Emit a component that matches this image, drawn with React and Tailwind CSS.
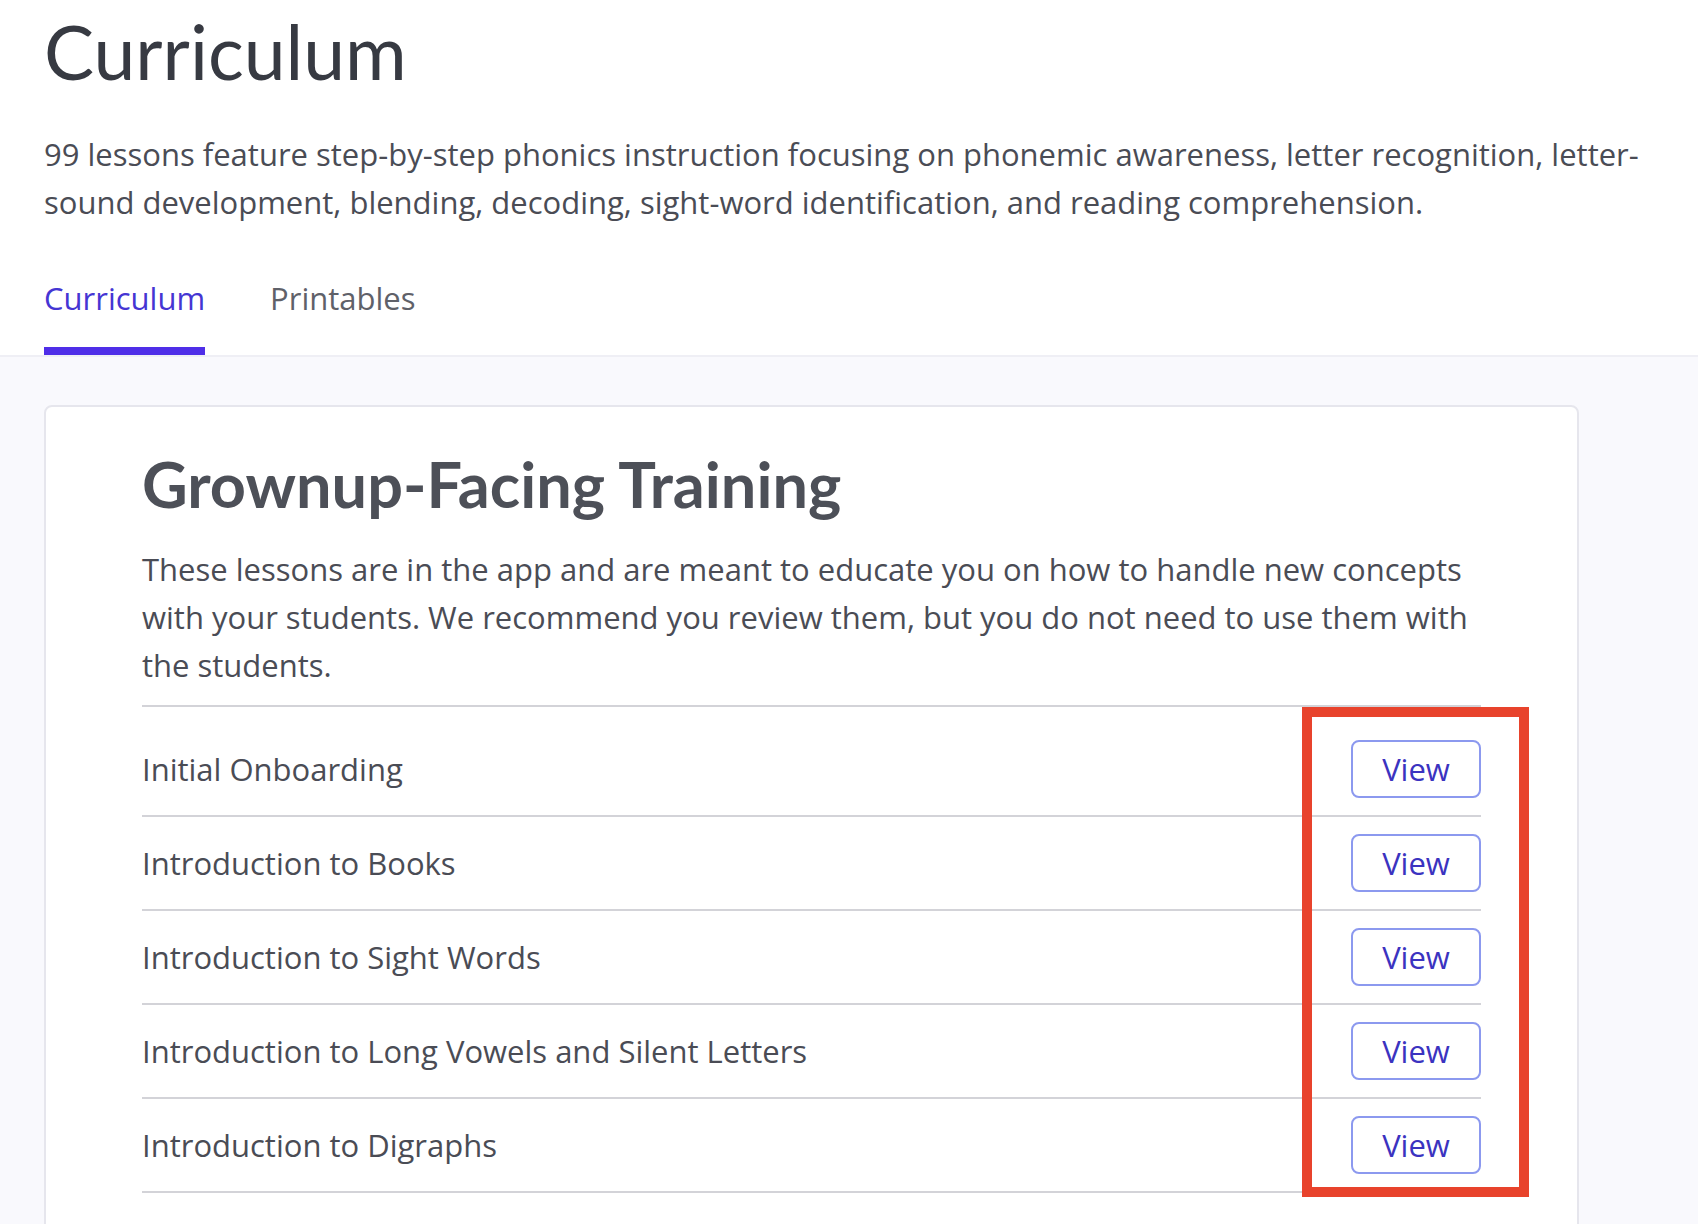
const lessons = [
  'Initial Onboarding',
  'Introduction to Books',
  'Introduction to Sight Words',
  'Introduction to Long Vowels and Silent Letters',
  'Introduction to Digraphs',
];

const body = { fontFamily: '"Open Sans", Lato, sans-serif' };
const display = { fontFamily: 'Lato, "Open Sans", sans-serif' };

const LessonRow = ({ title, first }) => (
  <div
    className={`flex items-center justify-between border-b-2 border-[#d3d3d8] pb-[17px] ${
      first ? 'pt-[33px]' : 'pt-[17px]'
    }`}
  >
    <span className="text-[31px] leading-[36px] text-[#4a4c55]">{title}</span>
    <button className="h-[58px] w-[130px] rounded-lg border-2 border-[#8c99ef] bg-white text-[31px] font-medium text-[#3b33c0]">
      View
    </button>
  </div>
);

export default function App() {
  return (
    <div className="relative h-[1224px] overflow-hidden bg-white" style={body}>
      {/* Page header */}
      <div className="px-[44px]">
        <h1 className="pt-[14px] text-[75px] leading-none text-[#373a42]" style={display}>
          Curriculum
        </h1>
        <p className="mt-[41px] text-[31px] leading-[48px] text-[#4a4c55]">
          99 lessons feature step-by-step phonics instruction focusing on phonemic awareness, letter
          recognition, letter-sound development, blending, decoding, sight-word identification, and
          reading comprehension.
        </p>

        {/* Tabs */}
        <div className="mt-[54px] flex gap-[65px]">
          <button className="border-b-8 border-[#4f2ee8] pb-[31px] text-[31px] leading-[36px] text-[#4535d3]">
            Curriculum
          </button>
          <button className="border-b-8 border-transparent pb-[31px] text-[31px] leading-[36px] text-[#5f6169]">
            Printables
          </button>
        </div>
      </div>

      {/* Content area */}
      <div className="h-full border-t-2 border-[#efeff5] bg-[#f9f9fd] px-[44px] pt-[48px]">
        <div className="w-[1535px] rounded-lg border-2 border-[#e6e6ed] bg-white px-[96px] pt-[45px] pb-[200px]">
          <h2 className="text-[63px] font-bold leading-none text-[#4d5058]" style={display}>
            Grownup-Facing Training
          </h2>
          <p className="mt-[30px] mb-[16px] text-[31px] leading-[48px] text-[#4a4c55]">
            These lessons are in the app and are meant to educate you on how to handle new concepts
            with your students. We recommend you review them, but you do not need to use them with
            the students.
          </p>
          <div className="border-t-2 border-[#d3d3d8]">
            {lessons.map((title, index) => (
              <LessonRow key={index} title={title} first={index === 0} />
            ))}
          </div>
        </div>
      </div>

      {/* Highlight annotation */}
      <div className="pointer-events-none absolute left-[1302px] top-[707px] h-[490px] w-[227px] border-[10px] border-[#e8432c]" />
    </div>
  );
}
